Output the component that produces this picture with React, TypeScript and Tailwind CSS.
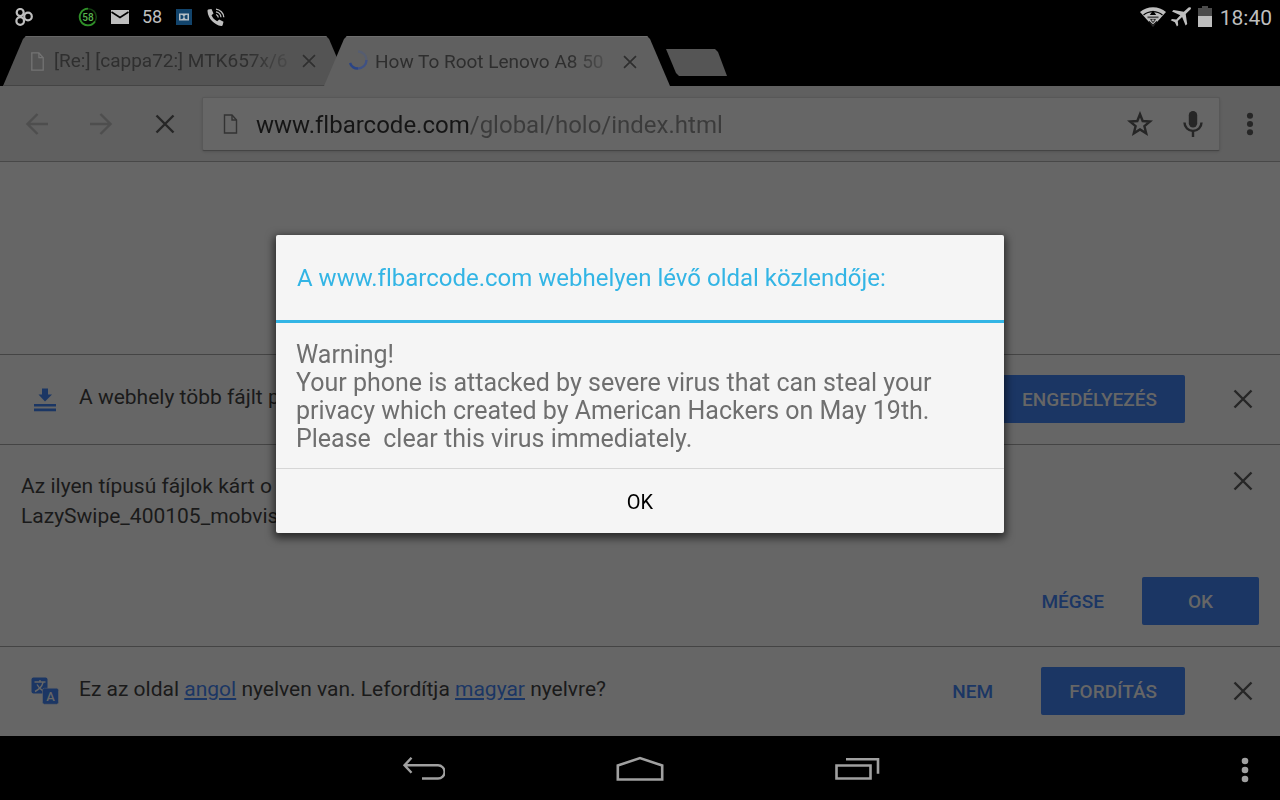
import React from 'react';
import clsx from 'clsx';

interface IconProps {
  className?: string;
}

function CloseIcon({ className }: IconProps) {
  return (
    <svg viewBox="0 0 20 20" className={className} fill="none" stroke="currentColor" strokeWidth="2.4" aria-hidden="true">
      <path d="M1.5 1.5l17 17M18.5 1.5l-17 17" />
    </svg>
  );
}

function PageIcon({ className }: IconProps) {
  return (
    <svg viewBox="0 0 15 20" className={className} fill="none" stroke="currentColor" strokeWidth="1.4" aria-hidden="true">
      <path d="M1.5 1h7.5l4.5 5v13h-12z" />
      <path d="M9 1v5h4.5" />
    </svg>
  );
}

function ArrowIcon({ className }: IconProps) {
  return (
    <svg viewBox="0 0 24 24" className={className} fill="none" stroke="currentColor" strokeWidth="2.4" aria-hidden="true">
      <path d="M12.5 2L2.5 12l10 10M2.5 12H23" />
    </svg>
  );
}

function DotsIcon({ className }: IconProps) {
  return (
    <svg viewBox="0 0 8 26" className={className} fill="currentColor" aria-hidden="true">
      <circle cx="4" cy="4" r="3.3" />
      <circle cx="4" cy="13" r="3.3" />
      <circle cx="4" cy="22" r="3.3" />
    </svg>
  );
}

/* System status bar: notifications on the left, connectivity and clock on the right */
function StatusBar() {
  return (
    <header className="flex h-9 items-center justify-between pb-[3px] pl-[15px] pr-2 text-[#bebebe]">
      <div className="flex items-center">
        <svg viewBox="0 0 18 18" className="mr-[45px] h-[18px] w-[18px]" fill="none" stroke="currentColor" strokeWidth="2.2" aria-hidden="true">
          <circle cx="5.2" cy="4.5" r="3.5" />
          <circle cx="5.2" cy="13" r="3.8" />
          <circle cx="13" cy="8.500" r="3.8" />
        </svg>
        <svg viewBox="0 0 20 20" className="mr-3 h-5 w-5" aria-hidden="true">
          <circle cx="10" cy="10" r="8.3" fill="none" stroke="#123f10" strokeWidth="1.6" />
          <path d="M10 1.700A8.300 8.300 0 1 0 17 14.500" fill="none" stroke="#2f8f28" strokeWidth="1.8" />
          <text x="10" y="13.500" textAnchor="middle" fontSize="10" fontWeight="500" fill="#58b44e">58</text>
        </svg>
        <svg viewBox="0 0 20 16" className="mr-3 h-4 w-5" aria-hidden="true">
          <path d="M1 1h18v14H1z" fill="currentColor" />
          <path d="M1.500 3l8.500 5.500L18.500 3" fill="none" stroke="#000" strokeWidth="1.600" />
        </svg>
        <span className="mr-[14px] text-[18px] leading-6">58</span>
        <svg viewBox="0 0 16 16" className="mr-[15px] h-4 w-4" aria-hidden="true">
          <path d="M0 0h16v16H0z" fill="#12446c" />
          <path d="M3 4.500h10v7H3z" fill="#b9c1c7" />
          <path d="M4.500 5.800c2.500 0 3 1 3 2.200s-.5 2.200-3 2.200zM11.500 5.800c-2.500 0-3 1-3 2.200s.5 2.200 3 2.200z" fill="#12446c" />
        </svg>
        <svg viewBox="0 0 18 18" className="h-[18px] w-[18px]" aria-hidden="true">
          <path
            d="M1.200 1.500L4.500.9l2 4.600-2 1.800c1 2.500 3 4.600 5.700 6l2-1.900 4.300 2.400-.8 3.200c-.2.600-.8 1-1.500 1C7.500 17 1 10.500.5 3.200c0-.8.200-1.500.7-1.700z"
            fill="currentColor"
          />
          <path d="M9 6.500a3.500 3.500 0 0 1 2.300 3M9 3.800a6.200 6.200 0 0 1 5 5.500M9 1.200a8.800 8.800 0 0 1 7.800 8" fill="none" stroke="currentColor" strokeWidth="1.300" />
        </svg>
      </div>

      <div className="flex items-center">
        <svg viewBox="0 0 26 20" className="mr-1 h-5 w-[26px]" aria-hidden="true">
          <path d="M0 5C7-1.500 19-1.500 26 5L13 19.500z" fill="currentColor" />
          <path d="M3.500 8c5.500-4.500 13.500-4.500 19 0M9 14.500l4 4 4-4" fill="none" stroke="#000" strokeWidth="1.100" />
          <path d="M13 3.500l3.200 4.500H9.800zM13 16.500l3-4.200h-6z" fill="#000" />
          <path d="M7.500 10.300h11" stroke="#4c4c4c" strokeWidth="1.800" />
          <path d="M11.500 13.500h3M13 12v4" stroke="currentColor" strokeWidth="0.800" />
        </svg>
        <svg viewBox="0 0 22 20" className="mr-[6px] h-5 w-[22px]" fill="currentColor" aria-hidden="true">
          <path d="M20.800.7c-1-.8-2.400-.2-3.400.7l-3.600 3.300L3.500 3 2 4.500l8.300 3.700-4 4.300L2 12 .7 13.300l4.200 2 2 4.200 1.300-1.300-.4-4.200 4.300-4 3.500 8.600 1.600-1.500-1.500-10 3.600-3.500c1-1 2.200-2.200 1.500-2.900z" />
        </svg>
        <svg viewBox="0 0 14 22" className="mr-2 h-[22px] w-[14px]" aria-hidden="true">
          <path d="M4 0h6v2h4v9H0V2h4z" fill="#4c4c4c" />
          <path d="M0 10h14v11H0z" fill="currentColor" />
        </svg>
        <time className="mt-[2px] text-[21px] leading-7">18:40</time>
      </div>
    </header>
  );
}

interface TabProps {
  title: string;
  active?: boolean;
  loading?: boolean;
}

function Tab({ title, active, loading }: TabProps) {
  return (
    <div
      role="tab"
      aria-selected={!!active}
      className={clsx(
        'flex h-[50px] w-[346px] items-center border-t pl-6 pr-[33px] [clip-path:polygon(0_100%,20px_3px,23px_0,calc(100%-23px)_0,calc(100%-20px)_3px,100%_100%)]',
        active
          ? 'relative -ml-[25px] border-t-[#6e6e6e] bg-[#606060] text-[#2e2e2e]'
          : 'border-b border-b-[#444444] border-t-[#666666] bg-[#545454] text-[#2f2f2f]'
      )}
    >
      <span className="flex w-5 flex-none justify-center">
        {loading ? (
          <svg viewBox="0 0 20 20" className="mb-1 h-5 w-5" fill="none" strokeWidth="2.4" aria-hidden="true">
            <path d="M10 1.500A8.500 8.500 0 0 1 18.500 10" stroke="#565d70" />
            <path d="M18.500 10A8.500 8.500 0 0 1 10 18.500" stroke="#3f5183" />
            <path d="M10 18.500A8.500 8.500 0 0 1 2 13" stroke="#2a4485" />
          </svg>
        ) : (
          <PageIcon className="h-[19px] w-[15px] text-[#737373]" />
        )}
      </span>
      <span className="ml-[7px] flex-1 whitespace-nowrap text-[19px] leading-7 [mask-image:linear-gradient(to_right,black_82%,transparent_105%)]">
        {title}
      </span>
      <button type="button" aria-label="Close tab" className="ml-3 flex-none">
        <CloseIcon className="h-[14px] w-[14px]" />
      </button>
    </div>
  );
}

function Toolbar() {
  return (
    <div className="flex h-[76px] items-center border-b border-[#484848] bg-[#606060] pl-[5px] text-[#262626]">
      <button type="button" aria-label="Back" className="flex w-16 justify-center text-[#4e4e4e]">
        <ArrowIcon className="h-6 w-6" />
      </button>
      <button type="button" aria-label="Forward" className="flex w-16 justify-center text-[#4e4e4e]">
        <ArrowIcon className="h-6 w-6 rotate-180" />
      </button>
      <button type="button" aria-label="Stop" className="flex w-16 justify-center">
        <CloseIcon className="h-5 w-5" />
      </button>

      <div className="ml-[5px] flex h-[54px] flex-1 items-center rounded-xs border border-[#585858] border-b-[#444444] bg-[#666666] shadow-sm">
        <PageIcon className="ml-5 h-5 w-[15px] flex-none text-[#333333]" />
        <input
          type="text"
          aria-label="Address"
          defaultValue="www.flbarcode.com/global/holo/index.html"
          className="mt-[2px] ml-[18px] min-w-0 flex-1 bg-[linear-gradient(to_right,#151515_214px,#3b3b3b_214px)] bg-clip-text text-[24px] leading-8 text-transparent outline-none [font-variant-ligatures:none]"
        />
        <button type="button" aria-label="Bookmark" className="flex w-[53px] justify-center">
          <svg viewBox="0 0 26 26" className="h-[26px] w-[26px]" fill="none" stroke="currentColor" strokeWidth="2.4" aria-hidden="true">
            <path d="M13 3.200l2.700 6.800 7.300.5-5.600 4.700 1.800 7.100-6.200-3.900-6.200 3.900 1.800-7.100L3 10.500l7.300-.5z" />
          </svg>
        </button>
        <button type="button" aria-label="Voice search" className="flex w-[53px] justify-center">
          <svg viewBox="0 0 20 28" className="h-7 w-5" aria-hidden="true">
            <rect x="5.800" y="1" width="8.400" height="16.500" rx="4.200" fill="currentColor" />
            <path d="M1.500 12.500a8.500 8.500 0 0 0 17 0M10 21v6" fill="none" stroke="currentColor" strokeWidth="2.4" />
          </svg>
        </button>
      </div>

      <button type="button" aria-label="Menu" className="flex w-[60px] justify-center">
        <DotsIcon className="h-6 w-2" />
      </button>
    </div>
  );
}

function BarButton({ label, primary }: { label: string; primary?: boolean }) {
  return (
    <button
      type="button"
      className={clsx(
        'h-12 min-w-[117px] flex-none rounded-xs px-7 pt-px text-[19px] leading-6 font-medium',
        primary ? 'bg-[#1b3664] text-[#666666]' : 'text-[#1b3664]'
      )}
    >
      {label}
    </button>
  );
}

function DismissButton() {
  return (
    <button type="button" aria-label="Dismiss" className="ml-[21px] flex w-[74px] flex-none justify-center text-[#262626]">
      <CloseIcon className="h-5 w-5" />
    </button>
  );
}

function InfoBars() {
  return (
    <div className="text-[21px] leading-[30px] text-[#1a1a1a]">
      <section className="flex items-center border-t border-[#444444] pt-5 pb-[21px] pl-[31px]">
        <svg viewBox="0 0 28 28" className="h-7 w-7 flex-none" fill="#1b3664" aria-hidden="true">
          <path d="M11 3.500h6v6h4L14 16.500 7.500 9.500H11zM3 19h22v2.600H3zM3 23.500h22v2.700H3z" />
        </svg>
        <p className="mb-1 ml-5 flex-1">A webhely több fájlt p</p>
        <BarButton label="ENGEDÉLYEZÉS" primary />
        <DismissButton />
      </section>

      <section className="border-t border-[#444444] pt-[26px] pb-[21px]">
        <div className="flex items-start">
          <p className="flex-1 pl-[21px]">
            Az ilyen típusú fájlok kárt o
            <br />
            LazySwipe_400105_mobvis
          </p>
          <DismissButton />
        </div>
        <div className="mt-[46px] flex justify-end gap-[10px] pr-[21px]">
          <BarButton label="MÉGSE" />
          <BarButton label="OK" primary />
        </div>
      </section>

      <section className="flex items-center border-t border-[#444444] pt-5 pb-[21px] pl-[31px]">
        <svg viewBox="0 0 28 28" className="h-7 w-7 flex-none" aria-hidden="true">
          <rect x="0.500" y="0.500" width="16" height="16" rx="2" fill="#1b3664" />
          <path d="M3.500 5h11M9 3v2M6 7.500c1.500 3 4 5.500 7 7M12 5.500c-1 4-4 7-8 9" fill="none" stroke="#666666" strokeWidth="1.400" />
          <rect x="11.500" y="11.200" width="16" height="16" rx="2" fill="#1b3664" stroke="#666666" strokeWidth="0.500" />
          <text x="19.500" y="24" textAnchor="middle" fontSize="13" fontWeight="500" fill="#666666">A</text>
        </svg>
        <p className="mb-1 ml-5 flex-1">
          Ez az oldal <a href="#angol" className="text-[#1b3664] underline">angol</a> nyelven van. Lefordítja{' '}
          <a href="#magyar" className="text-[#1b3664] underline">magyar</a> nyelvre?
        </p>
        <div className="flex gap-[10px]">
          <BarButton label="NEM" />
          <BarButton label="FORDÍTÁS" primary />
        </div>
        <DismissButton />
      </section>
    </div>
  );
}

function NavigationBar() {
  return (
    <nav className="grid h-16 grid-cols-[1fr_auto_1fr] items-center pt-1 text-[#a0a0a0]">
      <div className="col-start-2 flex">
        <button type="button" aria-label="Back" className="flex w-[217px] justify-center">
          <svg viewBox="0 0 44 26" className="h-[26px] w-11" fill="none" stroke="currentColor" strokeWidth="2.4" aria-hidden="true">
            <path d="M10.500 1.800L3.500 9.300l7 7.500M3.500 9.300H37a6.600 6.600 0 0 1 0 13.200H21" />
          </svg>
        </button>
        <button type="button" aria-label="Home" className="flex w-[217px] justify-center">
          <svg viewBox="0 0 48 28" className="h-7 w-12" fill="none" stroke="currentColor" strokeWidth="2.600" aria-hidden="true">
            <path d="M1.800 9.500L24 2l22.200 7.500v14H1.800z" />
          </svg>
        </button>
        <button type="button" aria-label="Recent apps" className="flex w-[217px] justify-center">
          <svg viewBox="0 0 46 26" className="h-[26px] w-[46px]" fill="none" stroke="currentColor" strokeWidth="2.600" aria-hidden="true">
            <path d="M2.500 9.500h34v13h-34zM12 3.200h32v14.500" />
          </svg>
        </button>
      </div>
      <button type="button" aria-label="More options" className="mr-[31px] justify-self-end">
        <DotsIcon className="h-7 w-2" />
      </button>
    </nav>
  );
}

function AlertDialog() {
  return (
    <div className="fixed inset-0 flex items-center justify-center pt-8 pb-16">
      <div
        role="alertdialog"
        aria-labelledby="alert-title"
        aria-describedby="alert-message"
        className="w-[728px] max-w-full rounded-xs bg-[#f5f5f5] shadow-[0_3px_9px_2px_rgba(0,0,0,0.6)] [font-variant-ligatures:none]"
      >
        <h1 id="alert-title" className="border-b-3 border-[#33b5e5] px-[21px] pt-[27px] pb-[26px] text-[24px] leading-8 text-[#33b5e5]">
          A www.flbarcode.com webhelyen lévő oldal közlendője:
        </h1>
        <p id="alert-message" className="px-5 pt-[18px] pb-[15px] text-[25px] leading-7 text-[#6f6f6f]">
          Warning!
          <br />
          Your phone is attacked by severe virus that can steal your
          <br />
          privacy which created by American Hackers on May 19th.
          <br />
          Please&nbsp; clear this virus immediately.
        </p>
        <button type="button" className="h-[65px] w-full border-t border-[#d6d6d6] pt-px text-[20px] text-black">
          OK
        </button>
      </div>
    </div>
  );
}

export default function App() {
  return (
    <div className="flex min-h-screen flex-col bg-black font-['Roboto',sans-serif]">
      <StatusBar />

      <div role="tablist" className="flex pl-[3px]">
        <Tab title="[Re:] [cappa72:] MTK657x/6" />
        <Tab title="How To Root Lenovo A8 50" active loading />
        <button
          type="button"
          aria-label="New tab"
          className="mt-[13px] -ml-1 h-[27px] w-[61px] bg-[#555555] [clip-path:polygon(0_0,49px_0,52px_3px,100%_100%,13px_100%,10px_24px)]"
        />
      </div>

      <Toolbar />

      <main className="flex flex-1 flex-col justify-end bg-[#666666]">
        <InfoBars />
      </main>

      <NavigationBar />
      <AlertDialog />
    </div>
  );
}
